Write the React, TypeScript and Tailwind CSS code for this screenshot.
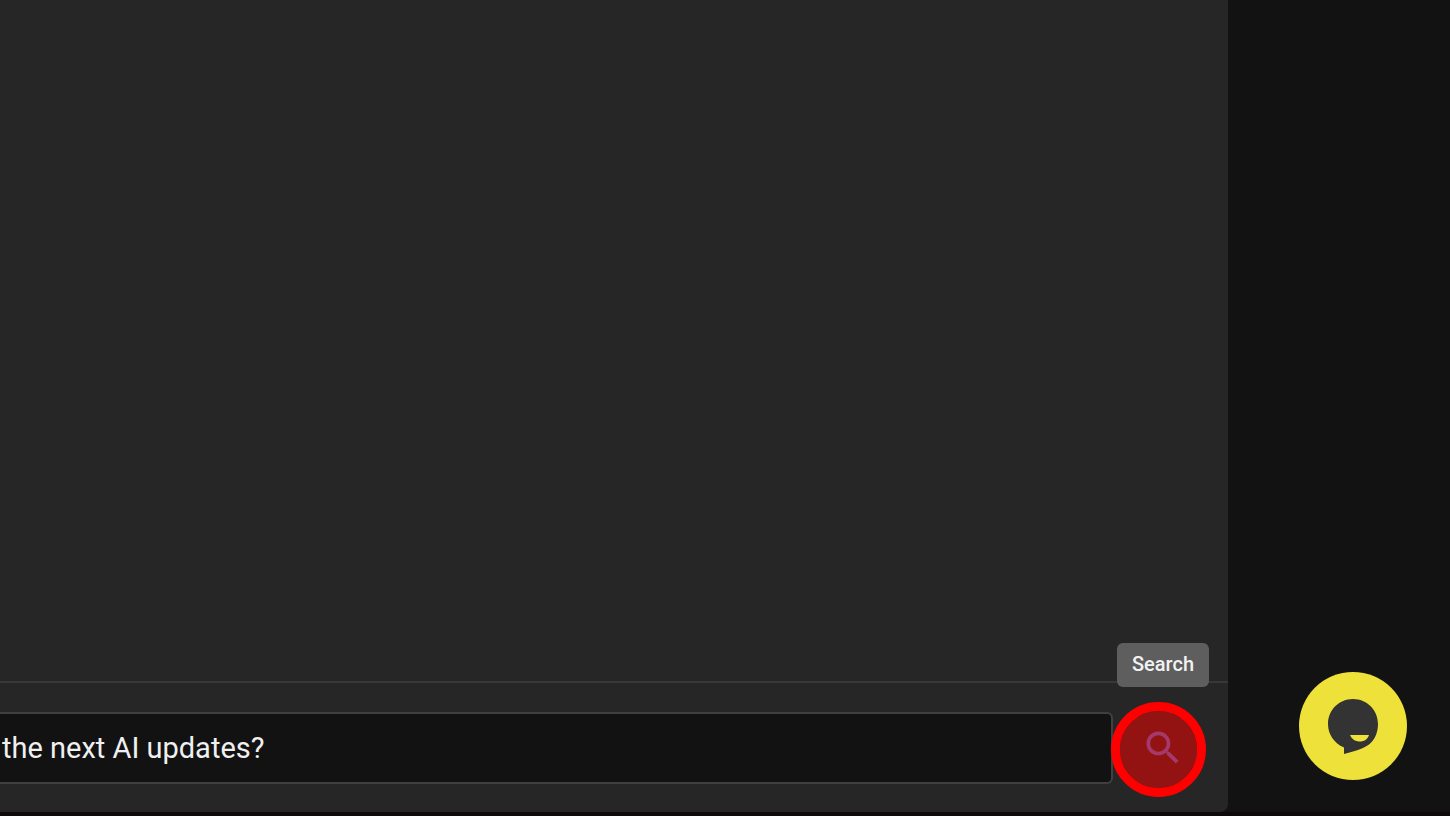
import { useState } from "react"

function SearchIcon() {
  return (
    <svg viewBox="0 0 24 24" className="size-11" fill="#4a72d6" aria-hidden="true">
      <path d="M15.5 14h-.79l-.28-.27C15.41 12.59 16 11.11 16 9.5 16 5.91 13.09 3 9.5 3S3 5.91 3 9.5 5.91 16 9.5 16c1.61 0 3.09-.59 4.23-1.57l.27.28v.79l5 4.99L20.49 19l-4.99-5zm-6 0C7.01 14 5 11.99 5 9.5S7.01 5 9.5 5 14 7.01 14 9.5 11.99 14 9.5 14z" />
    </svg>
  )
}

function ChatIcon() {
  return (
    <svg viewBox="0 0 54 56" className="h-14 w-[54px]" aria-hidden="true">
      <path
        d="M27 1C13 1 2 12 2 26c0 10.500 6 19 16 23.500V56c10-2.500 19-5 25-9.500 5.500-4.500 9-11.500 9-20.500C52 12 41 1 27 1z"
        fill="#333333"
      />
      <path d="M24 37h19c-1.500 4.500-5 6.500-9 6.500-4.500 0-8-2-10-6.500z" fill="#eee13a" />
    </svg>
  )
}

function SearchBar() {
  const [question, setQuestion] = useState("the next AI updates?")

  return (
    <form
      className="flex items-center border-t-2 border-[#383838] pt-[29px] pr-[29px] pb-7"
      onSubmit={(e) => e.preventDefault()}
    >
      <input
        type="text"
        aria-label="Question"
        value={question}
        onChange={(e) => setQuestion(e.target.value)}
        className="h-[72px] min-w-0 flex-1 rounded-r-md border-y-2 border-r-2 border-[#404040] bg-[#121212] px-0.5 text-[29px] text-[#f0f0f0] outline-none"
      />
      <button
        type="submit"
        aria-labelledby="search-tip"
        className="relative ml-3.5 flex size-[72px] items-center justify-center rounded-full"
      >
        <SearchIcon />
        {/* Highlight around the search button */}
        <span className="absolute -left-4 -top-2.5 size-[95px] rounded-full border-[9px] border-[#ff0000] bg-[#ff0000]/50 bg-clip-padding" />
        <span
          id="search-tip"
          role="tooltip"
          className="absolute bottom-full left-1/2 mb-[25px] flex h-11 -translate-x-1/2 items-center rounded-md bg-[#5e5e5e] px-[15px] pb-0.5 text-xl font-medium text-[#f2f2f2]"
        >
          Search
        </span>
      </button>
    </form>
  )
}

export default function App() {
  return (
    <div className="flex min-h-screen bg-[#121212] font-[Roboto,sans-serif]">
      <div className="flex min-w-0 flex-1 flex-col border-b-4 border-[#0c080b]">
        <main className="flex flex-1 flex-col rounded-br-lg bg-[#262626]">
          <section className="flex-1" aria-label="Conversation" />
          <SearchBar />
        </main>
      </div>

      <aside className="flex w-[222px] shrink-0 items-end justify-end border-b-4 border-[#0c080b] pb-8 pr-[43px]">
        <button
          type="button"
          aria-label="Open chat"
          className="flex size-[108px] items-center justify-center rounded-full bg-[#eee13a]"
        >
          <ChatIcon />
        </button>
      </aside>
    </div>
  )
}
